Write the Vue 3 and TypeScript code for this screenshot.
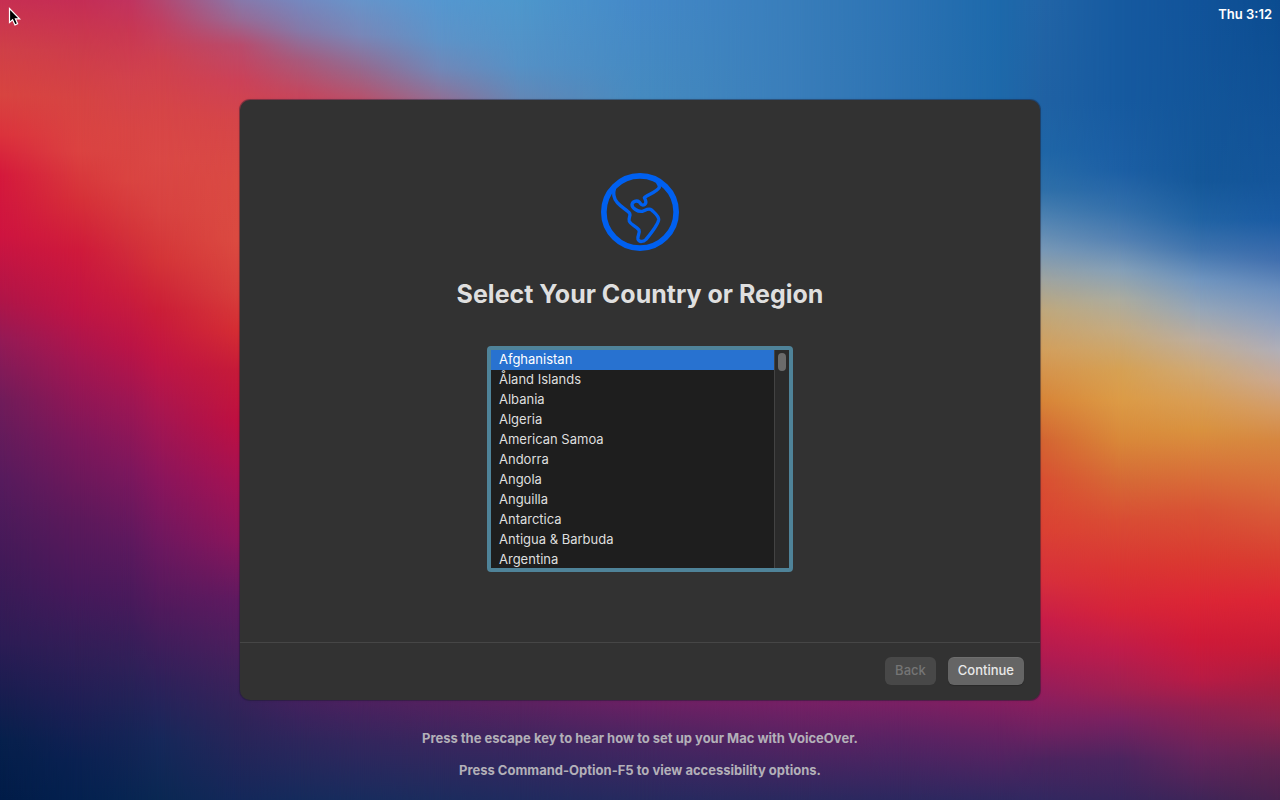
<script setup lang="ts">
import { computed, ref } from 'vue'

interface Column {
  x: number
  stops: [number, string][]
}

const countries: string[] = [
  'Afghanistan',
  'Åland Islands',
  'Albania',
  'Algeria',
  'American Samoa',
  'Andorra',
  'Angola',
  'Anguilla',
  'Antarctica',
  'Antigua & Barbuda',
  'Argentina',
]

const selected = ref<string>(countries[0])

// Wallpaper mesh: each column is a vertical ramp on a 1280 x 800 grid,
// faded in horizontally over the column to its left.
const columns: Column[] = [
  { x: 0, stops: [[0, '#c72f52'], [50, '#d04048'], [95, '#d84440'], [135, '#dc323c'], [175, '#d5193c'], [235, '#ce1440'], [300, '#b01548'], [340, '#941a56'], [400, '#701c5a'], [480, '#561b5d'], [560, '#421a58'], [640, '#2d1c55'], [690, '#1a1d50'], [740, '#06204c'], [800, '#011c48']] },
  { x: 80, stops: [[0, '#c52d55'], [50, '#cd3c4b'], [100, '#d64443'], [150, '#db4341'], [200, '#d63038'], [250, '#cf1a3b'], [310, '#c01444'], [360, '#a51650'], [440, '#7d175b'], [520, '#5c195b'], [590, '#47195b'], [650, '#311e57'], [700, '#201f55'], [760, '#0a2152'], [800, '#04214f']] },
  { x: 130, stops: [[0, '#c1335f'], [30, '#c83753'], [80, '#d2424c'], [130, '#d84544'], [180, '#da4441'], [230, '#d4343a'], [290, '#cb1e3b'], [345, '#bb1446'], [400, '#9e1653'], [470, '#7d175d'], [540, '#5e195e'], [600, '#481a5b'], [665, '#2f2058'], [735, '#152456'], [800, '#072552']] },
  { x: 160, stops: [[0, '#b4466f'], [25, '#c23e60'], [60, '#ce404f'], [110, '#d64547'], [160, '#da4845'], [210, '#d84240'], [260, '#d43438'], [310, '#cb1e38'], [360, '#c01544'], [410, '#a91650'], [480, '#8a155c'], [550, '#6a185f'], [610, '#4f1a5c'], [680, '#2f215a'], [740, '#16285a'], [800, '#0a2853']] },
  { x: 240, stops: [[0, '#8878aa'], [20, '#986a95'], [45, '#b94b6c'], [80, '#cc4158'], [120, '#d54549'], [180, '#da4a43'], [240, '#db4b41'], [290, '#d7403c'], [330, '#d52e33'], [370, '#c61b38'], [420, '#bf1040'], [480, '#a61252'], [540, '#8b155b'], [600, '#5f1a60'], [660, '#45205c'], [720, '#2e2459'], [800, '#14285a']] },
  { x: 300, stops: [[0, '#7588bf'], [30, '#8579a8'], [60, '#a75a7c'], [95, '#c5465d'], [400, '#a61252'], [700, '#44215e'], [740, '#2e265c'], [800, '#152b5c']] },
  { x: 360, stops: [[0, '#6794ca'], [35, '#7987b8'], [68, '#96698e'], [100, '#b9506a'], [400, '#a61252'], [700, '#4d215f'], [740, '#34265d'], [800, '#182c5d']] },
  { x: 440, stops: [[0, '#5597d0'], [40, '#5e93c8'], [70, '#7287b7'], [100, '#926f94'], [400, '#a61252'], [700, '#55215f'], [740, '#3a265e'], [800, '#1c2c5e']] },
  { x: 520, stops: [[0, '#4e97cc'], [65, '#5591c6'], [100, '#6487b6'], [400, '#a61252'], [700, '#5d2160'], [740, '#3e265f'], [800, '#202b5f']] },
  { x: 640, stops: [[0, '#4489c8'], [100, '#468bc0'], [400, '#a61252'], [700, '#6d2064'], [740, '#482561'], [800, '#262a5f']] },
  { x: 800, stops: [[0, '#387dba'], [100, '#397dba'], [400, '#a61252'], [700, '#782065'], [740, '#572362'], [800, '#2a295f']] },
  { x: 900, stops: [[0, '#2c73b4'], [100, '#2d73b2'], [400, '#a61252'], [700, '#7c2064'], [740, '#572363'], [800, '#2c285f']] },
  { x: 1000, stops: [[0, '#1d69ab'], [100, '#1e69aa'], [400, '#d07040'], [700, '#861e60'], [740, '#602262'], [800, '#2f2860']] },
  { x: 1040, stops: [[0, '#2265a7'], [100, '#2062a4'], [150, '#1f66a7'], [190, '#2f70a9'], [220, '#5284b2'], [250, '#7898b6'], [280, '#a0a49f'], [310, '#bfa87c'], [350, '#d39f5c'], [400, '#d88538'], [440, '#d46432'], [480, '#d94f32'], [530, '#db4133'], [580, '#d72f3c'], [620, '#c81d49'], [660, '#ae1b52'], [700, '#8c1e5e'], [730, '#702161'], [760, '#4c245f'], [800, '#322860']] },
  { x: 1120, stops: [[0, '#165aa0'], [100, '#165aa0'], [170, '#1c5fa5'], [210, '#3470ab'], [240, '#5582b3'], [270, '#85a0b8'], [300, '#acac9f'], [330, '#c4ab82'], [370, '#d6a154'], [400, '#dc9b46'], [440, '#d98839'], [480, '#d66a36'], [520, '#d94d34'], [570, '#da3433'], [610, '#d62439'], [650, '#bf1c4b'], [690, '#9e2052'], [720, '#7a2160'], [760, '#4b255f'], [800, '#36265d']] },
  { x: 1200, stops: [[0, '#11539a'], [180, '#145799'], [220, '#2163a4'], [250, '#4074ae'], [280, '#7095bf'], [310, '#96a6b8'], [340, '#bcaea0'], [370, '#cfa976'], [400, '#d89e56'], [430, '#d9923f'], [470, '#d87339'], [510, '#d85335'], [560, '#da3a30'], [600, '#dc2635'], [640, '#cf1a38'], [680, '#b81b45'], [710, '#8f2051'], [750, '#6b235b'], [800, '#3f2558']] },
  { x: 1280, stops: [[0, '#0b4c90'], [180, '#14559a'], [220, '#1a5ba3'], [260, '#416fae'], [290, '#6b8fbe'], [320, '#8da0c0'], [350, '#b0aeb8'], [380, '#c9a993'], [410, '#d49b64'], [440, '#d68740'], [480, '#d8703a'], [520, '#d85637'], [560, '#d93d31'], [600, '#dc2535'], [650, '#c71b37'], [690, '#a51e42'], [720, '#8d224d'], [760, '#602452'], [800, '#48224f']] },
]

const layers = computed(() =>
  columns.map((column, i) => {
    const ramp = column.stops.map(([y, c]) => `${c} ${(y / 800) * 100}%`).join(', ')
    const from = i === 0 ? -10 : (columns[i - 1].x / 1280) * 100
    const to = (column.x / 1280) * 100
    const mask = `linear-gradient(to right, transparent ${from}%, #000 ${to}%)`
    return {
      backgroundImage: `linear-gradient(to bottom, ${ramp})`,
      maskImage: mask,
    }
  }),
)
</script>

<template>
  <div class="desktop">
    <div class="wallpaper" aria-hidden="true">
      <div v-for="(layer, i) in layers" :key="i" class="wallpaper-layer" :style="layer"></div>
    </div>

    <header class="menubar">
      <time class="clock">Thu 3:12</time>
    </header>

    <main class="assistant">
      <section class="content">
        <svg class="globe" viewBox="33 33 234 234" fill="none" aria-hidden="true">
          <circle cx="150" cy="150" r="108.5" stroke="currentColor" stroke-width="17" />
          <path
            d="M74 78 C69 92 70 108 82 122 C94 136 112 144 119 154 C123 162 114 168 118 178 C123 189 140 193 147 204 C151 213 141 222 144 232 C148 241 160 240 168 232 C182 215 204 188 206 173 C207 162 193 152 185 144 C176 137 166 145 157 148 C143 150 126 138 126 128 C127 118 140 114 148 120 C153 126 153 131 161 129 C172 125 167 114 163 107 C171 100 204 87 208 76 C209 70 206 66 203 62"
            stroke="currentColor"
            stroke-width="10"
            stroke-linejoin="round"
            stroke-linecap="round"
          />
        </svg>

        <h1 id="country-title" class="title">Select Your Country or Region</h1>

        <div class="listbox">
          <select v-model="selected" class="countries" size="11" aria-labelledby="country-title">
            <option v-for="country in countries" :key="country" :value="country">{{ country }}</option>
          </select>
          <div class="track" aria-hidden="true">
            <div class="thumb"></div>
          </div>
        </div>
      </section>

      <footer class="actions">
        <button type="button" class="button" disabled>Back</button>
        <button type="button" class="button">Continue</button>
      </footer>
    </main>

    <aside class="hints">
      <p>Press the escape key to hear how to set up your Mac with VoiceOver.</p>
      <p>Press Command-Option-F5 to view accessibility options.</p>
    </aside>

    <svg class="pointer" viewBox="0 0 14 20" aria-hidden="true">
      <path
        d="M1.5 1.5 V15.4 L4.6 12.8 L7 17.9 L9.6 16.7 L7.4 11.8 H11.6 Z"
        fill="#000"
        stroke="#fff"
        stroke-width="1.2"
        stroke-linejoin="miter"
      />
    </svg>
  </div>
</template>

<style>
body {
  margin: 0;
}
</style>

<style scoped>
.desktop {
  position: relative;
  display: grid;
  grid-template-rows: minmax(100px, 1fr) auto minmax(100px, 1fr);
  justify-items: center;
  min-height: 100vh;
  overflow: hidden;
  font-family: Inter, "Liberation Sans", sans-serif;
  font-size: 13px;
  line-height: 16px;
  color: #dfdfdf;
}

.wallpaper,
.wallpaper-layer {
  position: absolute;
  inset: 0;
}

.menubar {
  position: relative;
  justify-self: stretch;
  display: flex;
  justify-content: flex-end;
  padding: 6px 8px;
}

.clock {
  font-weight: 600;
  color: #fff;
}

.assistant {
  position: relative;
  display: flex;
  flex-direction: column;
  box-sizing: border-box;
  width: min(800px, 100% - 32px);
  min-height: 600px;
  border-radius: 10px;
  background: #323232;
  box-shadow: 0 0 0 1px rgba(30, 30, 50, 0.4), 0 0 3px rgba(0, 0, 0, 0.2);
}

.content {
  flex: 1;
  display: flex;
  flex-direction: column;
  align-items: center;
  padding: 73px 16px 16px;
}

.globe {
  width: 78px;
  height: 78px;
  color: #0060f0;
}

.title {
  margin: 27px 0 36px;
  font-size: 25px;
  line-height: 32px;
  font-weight: 700;
  text-align: center;
}

.listbox {
  display: flex;
  border: 4px solid #4f8399;
  border-radius: 4px;
  background: #1e1e1e;
}

.countries {
  width: 283px;
  height: 218px;
  margin: 0;
  padding: 0;
  border: 0;
  border-radius: 0;
  outline: 0;
  overflow: hidden;
  scrollbar-width: none;
  background: #1e1e1e;
  color: #dfdfdf;
  font: inherit;
}

.countries option {
  box-sizing: border-box;
  height: 20px;
  min-height: 20px;
  padding: 1px 8px 3px;
  line-height: 16px;
  color: #dfdfdf;
}

.countries option:checked {
  background: #2872d0 linear-gradient(#2872d0, #2872d0);
  color: #fff;
}

.track {
  display: flex;
  justify-content: center;
  align-items: flex-start;
  box-sizing: border-box;
  width: 15px;
  padding-top: 3px;
  border-left: 1px solid #434343;
  background: #2b2b2b;
}

.thumb {
  width: 8px;
  height: 18px;
  border-radius: 4px;
  background: #6b6b6b;
}

.actions {
  display: flex;
  justify-content: flex-end;
  gap: 12px;
  padding: 14px 16px 15px;
  border-top: 1px solid #464646;
}

.button {
  height: 28px;
  padding: 0 10px 2px;
  border: 0;
  border-radius: 6px;
  background: #656565;
  box-shadow: inset 0 1px 0 rgba(255, 255, 255, 0.06), 0 1px 1px rgba(0, 0, 0, 0.2);
  color: #e8e8e8;
  font: inherit;
  font-weight: 500;
}

.button:disabled {
  background: #484848;
  box-shadow: none;
  color: #757575;
}

.hints {
  position: relative;
  display: flex;
  flex-direction: column;
  gap: 16px;
  padding: 30px 16px 0;
  text-align: center;
  font-weight: 700;
  color: #b3b0b8;
}

.hints p {
  margin: 0;
}

.pointer {
  position: absolute;
  left: 8px;
  top: 7px;
  width: 14px;
  height: 20px;
}
</style>
